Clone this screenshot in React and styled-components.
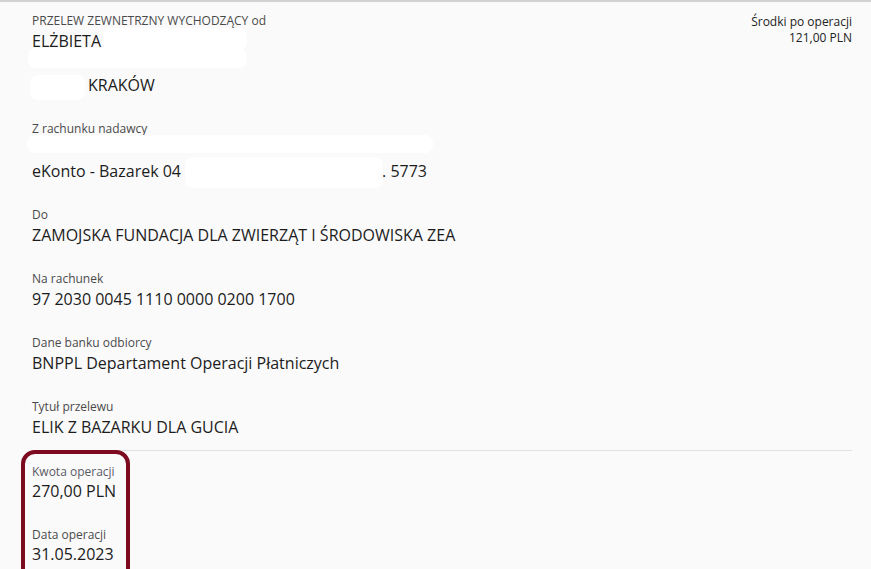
import React from "react";
import styled, { createGlobalStyle } from "styled-components";

const GlobalStyle = createGlobalStyle`
  html, body {
    margin: 0;
    padding: 0;
    background: #fafafa;
  }
  body {
    font-family: "Open Sans", "Noto Sans", sans-serif;
    -webkit-font-smoothing: antialiased;
  }
`;

export default function App() {
  return (
    <>
      <GlobalStyle />
      <Page>
        <Header>
          <Section>
            <Label>PRZELEW ZEWNETRZNY WYCHODZĄCY od</Label>
            <Value>
              <Line>ELŻBIETA</Line>
              <Line />
              <Line $indent={56}>KRAKÓW</Line>
            </Value>
            <Redaction $left={71} $top={15.5} $width={144} $height={22} />
            <Redaction $left={-4} $top={35.5} $width={219} $height={20} />
            <Redaction $left={-2} $top={62.5} $width={55} $height={25} />
          </Section>

          <Balance>
            <span>Środki po operacji</span>
            <span>121,00 PLN</span>
          </Balance>
        </Header>

        <Section>
          <Label>Z rachunku nadawcy</Label>
          <Value>
            <Line />
            <Line>
              eKonto - Bazarek 04
              <Gap />. 5773
            </Line>
          </Value>
          <Redaction $left={-5} $top={14.5} $width={406} $height={18} />
          <Redaction $left={153} $top={36.5} $width={198} $height={31} />
        </Section>

        <Section>
          <Label>Do</Label>
          <Value>ZAMOJSKA FUNDACJA DLA ZWIERZĄT I ŚRODOWISKA ZEA</Value>
        </Section>

        <Section>
          <Label>Na rachunek</Label>
          <Value>97 2030 0045 1110 0000 0200 1700</Value>
        </Section>

        <Section>
          <Label>Dane banku odbiorcy</Label>
          <Value>BNPPL Departament Operacji Płatniczych</Value>
        </Section>

        <Section>
          <Label>Tytuł przelewu</Label>
          <Value>ELIK Z BAZARKU DLA GUCIA</Value>
        </Section>

        <Summary>
          <Highlight>
            <Section>
              <Label $muted>Kwota operacji</Label>
              <Value $tight>270,00 PLN</Value>
            </Section>
            <Section>
              <Label>Data operacji</Label>
              <Value $tight>31.05.2023</Value>
            </Section>
          </Highlight>
        </Summary>
      </Page>
    </>
  );
}

const Page = styled.div`
  box-sizing: border-box;
  height: 569px;
  overflow: hidden;
  border-top: 2px solid #d2d2d2;
  padding: 0 19px 0 32px;
  background: #fafafa;
`;

const Header = styled.div`
  display: flex;
  justify-content: space-between;
  align-items: flex-start;
  padding-top: 10.5px;
  margin-bottom: 25px;
`;

const Section = styled.div`
  position: relative;

  & + & {
    margin-top: 25px;
  }
`;

const Label = styled.div`
  font-size: 12px;
  line-height: 16px;
  color: ${(props) => (props.$muted ? "#5a5a66" : "#4a4a4a")};
`;

const Value = styled.div`
  margin-top: ${(props) => (props.$tight ? "0" : "1px")};
  font-size: 16px;
  line-height: 22px;
  color: #1c1c1c;
`;

const Line = styled.div`
  min-height: 22px;
  padding-left: ${(props) => props.$indent || 0}px;
`;

const Gap = styled.span`
  display: inline-block;
  width: 201px;
`;

const Redaction = styled.div`
  position: absolute;
  left: ${(props) => props.$left}px;
  top: ${(props) => props.$top}px;
  width: ${(props) => props.$width}px;
  height: ${(props) => props.$height}px;
  background: #ffffff;
  border-radius: 8px;
`;

const Balance = styled.div`
  display: flex;
  flex-direction: column;
  align-items: flex-end;
  margin-top: 1.5px;
  font-size: 12px;
  line-height: 16px;
  color: #222;
`;

const Summary = styled.div`
  margin-top: 12.5px;
  border-top: 1px solid #e2e2e2;
`;

const Highlight = styled.div`
  box-sizing: border-box;
  width: 109px;
  margin: -1px 0 0 -11px;
  padding: 10px 0 20px 7px;
  border: 4px solid #7d0a1e;
  border-radius: 14px;
`;
